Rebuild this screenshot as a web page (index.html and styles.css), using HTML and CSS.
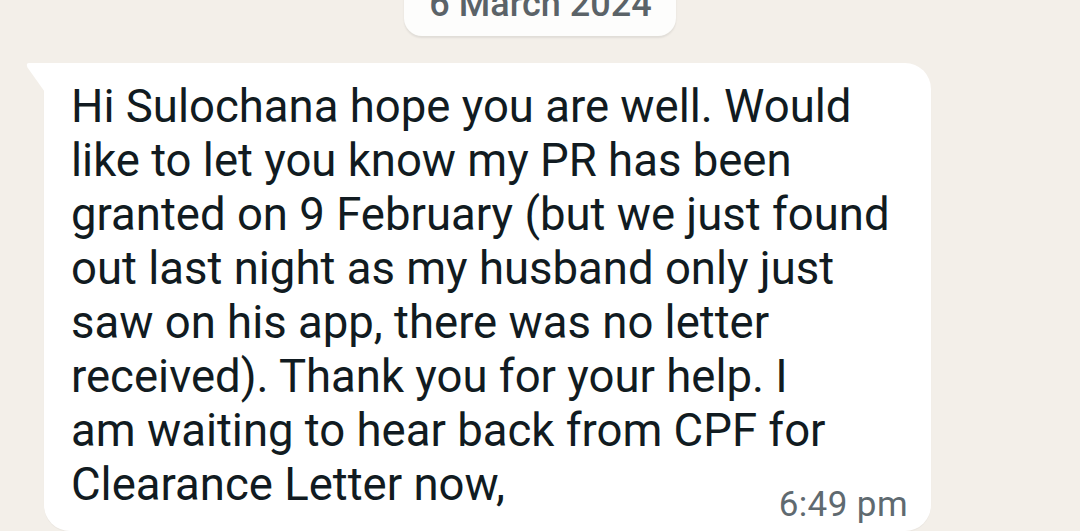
FILE: index.html
```html
<!DOCTYPE html>
<html>
<head>
<title>Chat</title>
<link rel="stylesheet" href="styles.css">
</head>
<body>
<div class="chat">
    <div class="date-row">
        <div class="date-pill">6 March 2024</div>
    </div>
    <div class="msg-row">
        <div class="bubble">
            <svg class="tail" width="22" height="32" viewBox="0 0 22 32">
                <path d="M22 0 L22 32 L2.5 4.5 Q0.5 0 4 0 Z" fill="#ffffff"/>
            </svg>
            <div class="msg-text">Hi Sulochana hope you are well. Would like to let you know my PR has been granted on 9 February (but we just found out last night as my husband only just saw on his app, there was no letter received). Thank you for your help. I<br>am waiting to hear back from CPF for Clearance Letter now,</div>
            <div class="msg-time">6:49 pm</div>
        </div>
    </div>
</div>
</body>
</html>
```

FILE: styles.css
```css
html, body {
    margin: 0;
    height: 100%;
    overflow: hidden;
}

body {
    background-color: #f3efe9;
    font-family: Roboto, "Noto Sans", sans-serif;
}

.chat {
    display: flex;
    flex-direction: column;
}

.date-row {
    display: flex;
    justify-content: center;
    margin-top: -23px;
}

.date-pill {
    background-color: #fdfdfc;
    color: #5b6368;
    font-size: 36px;
    font-weight: 500;
    line-height: 40px;
    padding: 7px 24px 12px 25px;
    border-radius: 0 0 18px 18px;
    box-shadow: 0 2px 2px rgba(0, 0, 0, 0.08);
}

.msg-row {
    display: flex;
    margin-top: 27px;
    padding-left: 44px;
}

.bubble {
    position: relative;
    width: 887px;
    box-sizing: border-box;
    background-color: #ffffff;
    border-radius: 0 26px 26px 26px;
    padding: 17px 23px 8px 27px;
    display: grid;
    grid-template-areas: "body";
    box-shadow: 0 1px 1px rgba(0, 0, 0, 0.04);
}

.tail {
    position: absolute;
    left: -19px;
    top: 0;
}

.msg-text {
    grid-area: body;
    color: #111b21;
    font-size: 45.5px;
    line-height: 54px;
    margin-bottom: 11px;
    padding-right: 7px;
}

.msg-time {
    grid-area: body;
    justify-self: end;
    align-self: end;
    color: #5f6a70;
    font-size: 35px;
    letter-spacing: 0.4px;
    line-height: 40px;
    margin-bottom: -2px;
}
```
